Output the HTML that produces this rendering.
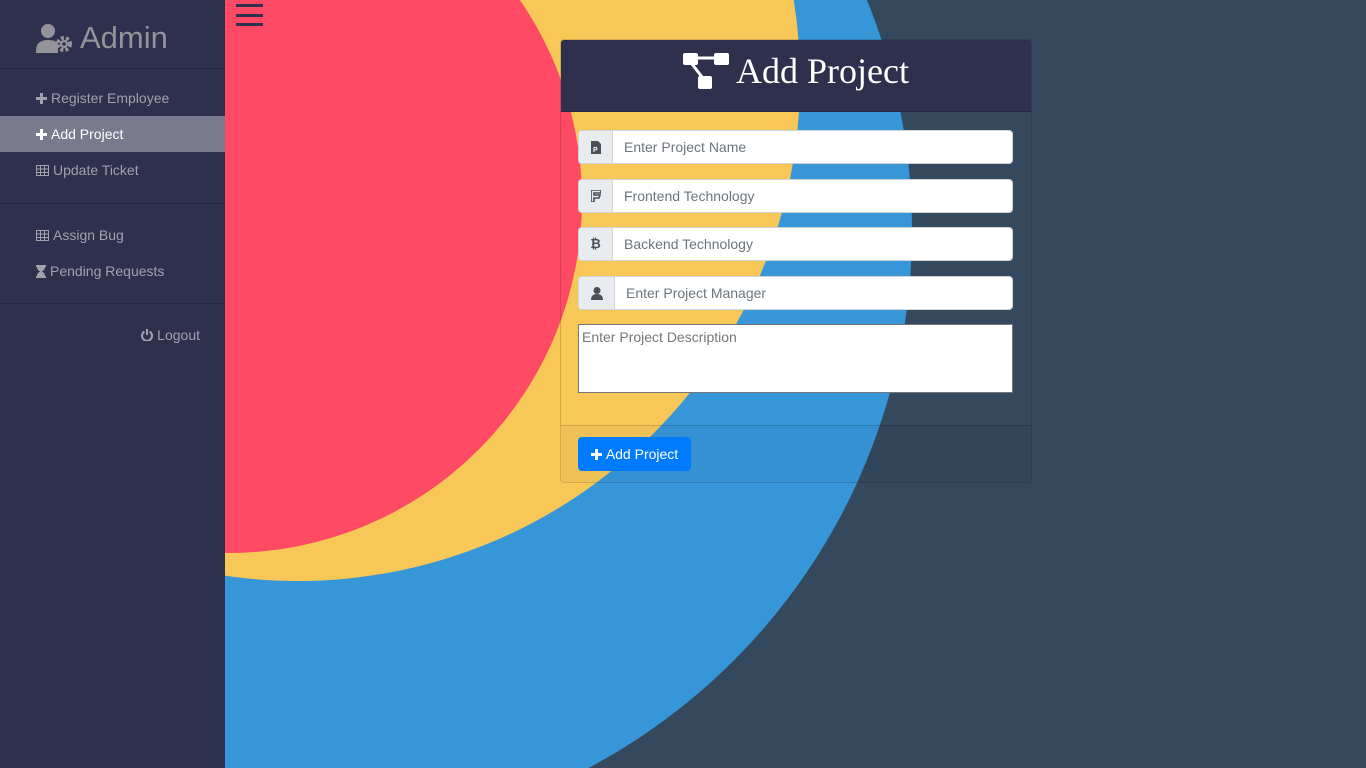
<!DOCTYPE html>
<html><head><meta charset="utf-8"><style>
*{box-sizing:border-box;margin:0;padding:0}
html,body{width:1366px;height:768px;overflow:hidden}
body{background:#34495e;font-family:"Liberation Sans",sans-serif;position:relative}
#bg{position:absolute;left:0;top:0;display:block}
.side{position:absolute;left:0;top:0;width:225px;height:768px;background:#2f2f4e;color:#9a9aa6}
.brand{height:69px;border-bottom:1px solid #27273f;display:flex;align-items:center;padding:8px 0 0 36px;font-size:31px;color:#939399}
.nav a{display:flex;align-items:center;height:36px;padding-left:36px;font-size:14px;color:#a2a2ad}
.nav a.act{background:#7a7a8f;color:#fff}
.nav a svg{margin-right:4px}
.hr{border-top:1px solid #27273f}
.card{position:absolute;left:560px;top:39px;width:472px;height:444px;border:1px solid rgba(0,0,0,.15);border-radius:4px;overflow:hidden}
.hd{height:72px;background:#2f2f4e;display:flex;align-items:center;justify-content:center;color:#fff;font-family:"Liberation Serif",serif;font-size:36px;border-bottom:1px solid rgba(0,0,0,.2);padding-bottom:9px}
.ig{position:absolute;left:17px;width:435px;height:34px;display:flex;background:#fff;border:1px solid #ced4da;border-radius:4px;overflow:hidden}
.ig .p{width:34px;background:#e9ecef;border-right:1px solid #ced4da;display:flex;align-items:center;justify-content:center}
.ig span{padding-left:11px;line-height:32px;font-size:14px;color:#6c757d}
.ta{position:absolute;left:17px;top:284px;width:435px;height:69px;background:#fff;border:1px solid #767676;font-size:14px;color:#777;padding:4px 3px}
.ft{position:absolute;left:0;top:385px;width:100%;height:58px;background:rgba(0,0,0,.03);border-top:1px solid rgba(0,0,0,.15)}
.btn{position:absolute;left:17px;top:11px;width:113px;height:34px;background:#007bff;border-radius:4px;color:#fff;font-size:14px;display:flex;align-items:center;justify-content:center}
</style></head><body>
<svg id="bg" width="1366" height="768">
<circle cx="303" cy="230" r="609" fill="#3796d8"/>
<circle cx="298" cy="79" r="502" fill="#f7c757"/>
<circle cx="229" cy="200" r="353" fill="#fe4a65"/>
<rect x="236" y="4" width="27" height="3" fill="#2f2f4e"/><rect x="236" y="14" width="27" height="3" fill="#2f2f4e"/><rect x="236" y="23" width="27" height="3" fill="#2f2f4e"/>
</svg>
<div class="side">
<div class="brand"><svg width="38" height="30" viewBox="0 0 38 30" style="margin-right:6px"><circle cx="12" cy="8" r="7" fill="#939399"/><path d="M0 28q0-11 12-11q7 0 10 3v10H0z" fill="#939399"/><circle cx="28" cy="21" r="6" fill="none" stroke="#939399" stroke-width="4" stroke-dasharray="3 2"/><circle cx="28" cy="21" r="4" fill="#939399"/><circle cx="28" cy="21" r="1.7" fill="#2f2f4e"/></svg>Admin</div>
<div class="nav" style="padding-top:11px">
<a><svg width="11" height="11"><path d="M4 0h3v4h4v3H7v4H4V7H0V4h4z" fill="#a2a2ad"/></svg>Register Employee</a>
<a class="act"><svg width="11" height="11"><path d="M4 0h3v4h4v3H7v4H4V7H0V4h4z" fill="#fff"/></svg>Add Project</a>
<a><svg width="13" height="11"><rect x=".5" y=".5" width="12" height="10" fill="none" stroke="#a2a2ad"/><path d="M0 4h13M0 7.5h13M4.5 0v11M8.5 0v11" stroke="#a2a2ad"/></svg>Update Ticket</a>
</div>
<div class="hr" style="margin-top:15px"></div>
<div class="nav" style="padding-top:13px">
<a><svg width="13" height="11"><rect x=".5" y=".5" width="12" height="10" fill="none" stroke="#a2a2ad"/><path d="M0 4h13M0 7.5h13M4.5 0v11M8.5 0v11" stroke="#a2a2ad"/></svg>Assign Bug</a>
<a><svg width="10" height="13"><path d="M0 0h10v2H9q0 3-3 4.5Q9 8 9 11h1v2H0v-2h1q0-3 3-4.5Q1 5 1 2H0z" fill="#a2a2ad"/></svg>Pending Requests</a>
</div>
<div class="hr" style="margin-top:14px"></div>
<div style="padding:23px 25px 0 0;text-align:right;font-size:14px;color:#a2a2ad"><svg width="12" height="12" style="vertical-align:-1px"><path d="M3.5 2.5A5 5 0 1 0 8.5 2.5" fill="none" stroke="#a2a2ad" stroke-width="2"/><path d="M6 0v6" stroke="#a2a2ad" stroke-width="2"/></svg> Logout</div>
</div>
<div class="card">
<div class="hd"><svg width="46" height="38" viewBox="0 0 46 38" style="margin-right:7px"><rect x="0" y="1" width="15" height="12" rx="2" fill="#fff"/><rect x="31" y="1" width="15" height="12" rx="2" fill="#fff"/><rect x="15" y="24" width="14" height="13" rx="2" fill="#fff"/><path d="M15 6h16M9 12l10 13" stroke="#fff" stroke-width="3"/></svg>Add Project</div>
<div class="ig" style="top:90px"><div class="p"><svg width="10" height="13"><path d="M0 0h7l3 3v10H0z" fill="#495057"/><text x="2" y="11" font-size="7" fill="#fff" font-weight="bold">P</text></svg></div><span>Enter Project Name</span></div>
<div class="ig" style="top:139px"><div class="p"><svg width="10" height="12"><path d="M0 0h10v3H3v2h6l-1 3H3v4H0z" fill="none" stroke="#495057" stroke-width="1.6"/></svg></div><span>Frontend Technology</span></div>
<div class="ig" style="top:187px"><div class="p"><span style="padding:0;font-weight:bold;color:#495057;font-size:13px">₿</span></div><span>Backend Technology</span></div>
<div class="ig" style="top:236px"><div class="p" style="width:36px"><svg width="12" height="13"><circle cx="6" cy="3.5" r="3.5" fill="#495057"/><path d="M0 13q0-6 6-6t6 6z" fill="#495057"/></svg></div><span>Enter Project Manager</span></div>
<div class="ta">Enter Project Description</div>
<div class="ft"><div class="btn"><svg width="11" height="11" style="margin-right:4px"><path d="M4 0h3v4h4v3H7v4H4V7H0V4h4z" fill="#fff"/></svg>Add Project</div></div>
</div>
</body></html>
